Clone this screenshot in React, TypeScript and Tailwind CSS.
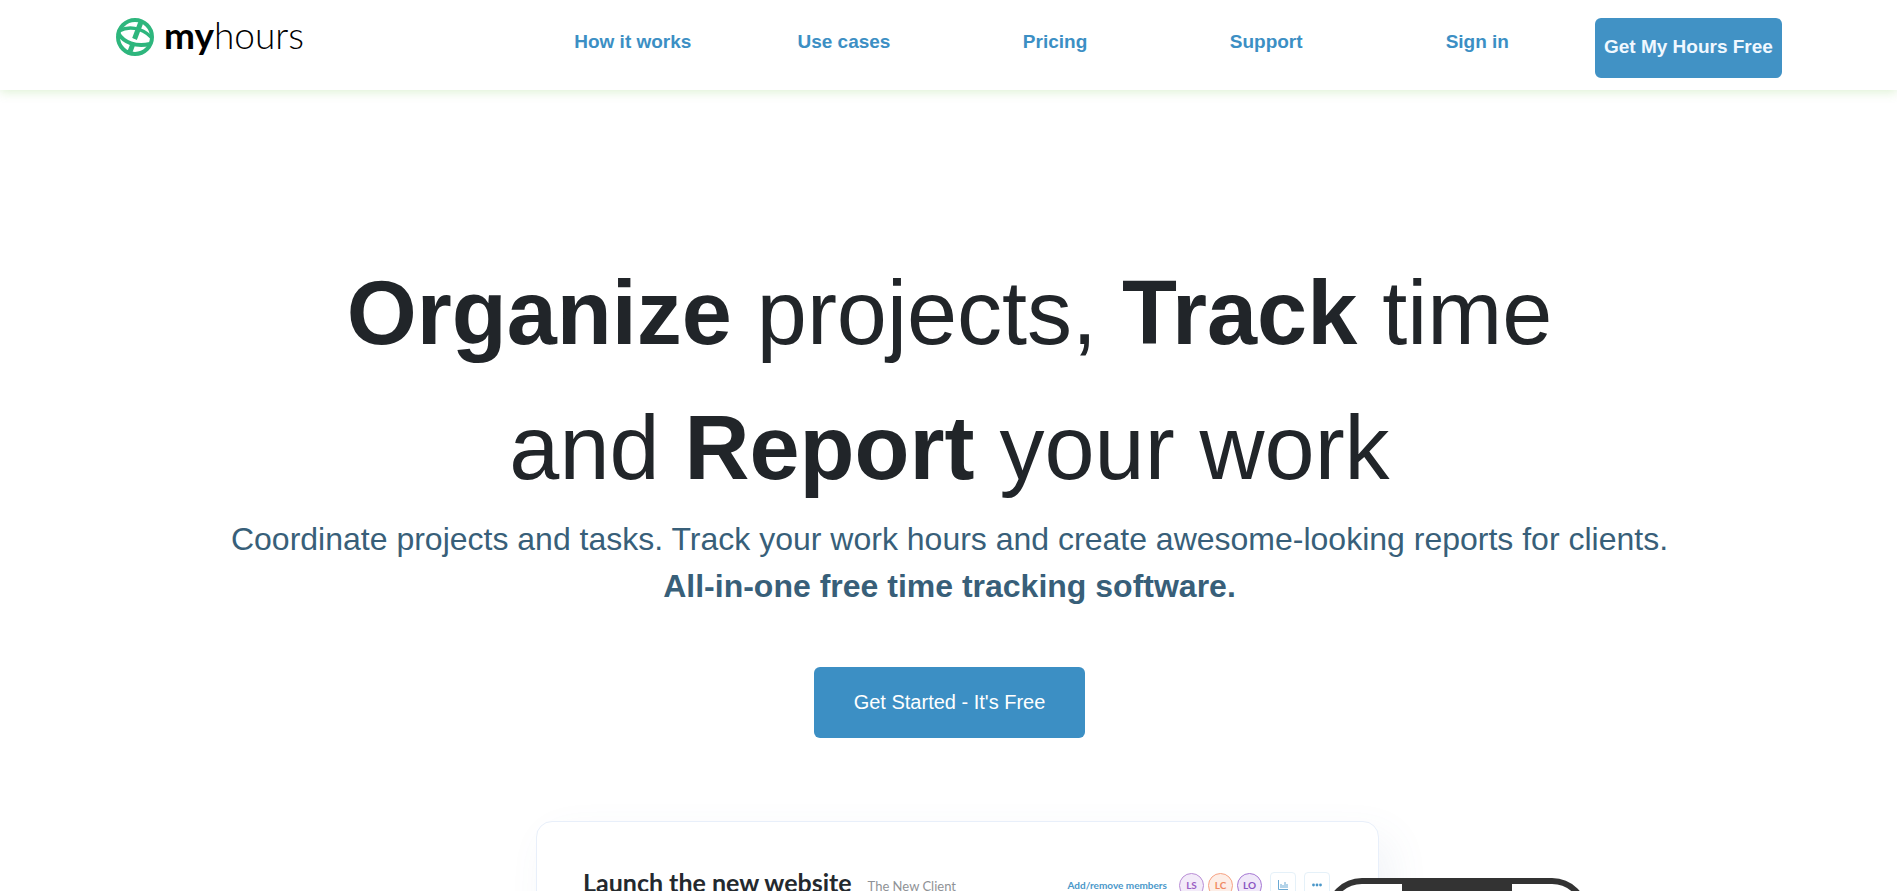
import React from 'react';

const navLinks = ['How it works', 'Use cases', 'Pricing', 'Support', 'Sign in'];

const members = [
  { initials: 'LS', tone: 'border-[#b98ed6] bg-[#f3ebf9] text-[#9b5fc4]' },
  { initials: 'LC', tone: 'border-[#f6a283] bg-[#fdeee7] text-[#f08a63]' },
  { initials: 'LO', tone: 'border-[#a678d4] bg-[#f0e8f9] text-[#8a55c2]' },
];

function Logo() {
  return (
    <a href="#home" aria-label="myhours" className="flex items-center gap-2.5">
      <svg viewBox="0 0 38 38" className="size-[38px]" fill="none" stroke="#2eb67d" strokeWidth="4">
        <circle cx="19" cy="19" r="17" />
        <path d="M3 13C12 8 25 9 35 19" strokeWidth="3.500" />
        <path d="M2 15C8 25 20 29 34 26" />
        <path d="M25 4L18.500 21" strokeWidth="5" />
        <path d="M16.500 27L13.500 35" strokeWidth="5" />
        <path d="M15 20.500C17 22 20 23 23 23.200" stroke="white" strokeWidth="1.500" />
      </svg>
      <span className="pb-1 font-[Lato,sans-serif] text-[37px] leading-[34px] text-black">
        <span className="font-bold">my</span>
        <span className="font-light">hours</span>
      </span>
    </a>
  );
}

function Header() {
  return (
    <header className="shrink-0 bg-white px-4 shadow-[0_2px_10px_rgba(120,200,80,0.25)] xl:pr-[103px] xl:pl-[105px]">
      <div className="grid h-[90px] grid-cols-8 items-start">
        <div className="col-span-2 pt-[18px] pl-[11px]">
          <Logo />
        </div>
        <nav aria-label="Main" className="col-span-5 grid grid-cols-5 pt-7">
          {navLinks.map((label) => (
            <a key={label} href="#" className="text-center text-[19px] leading-7 font-bold text-[#3c8fc4]">
              {label}
            </a>
          ))}
        </nav>
        <div className="px-3 pt-[18px]">
          <button type="button" className="h-[60px] w-full rounded-md bg-[#4192c5] pb-0.5 text-[19px] font-bold whitespace-nowrap text-[#f0f8ff]">
            Get My Hours Free
          </button>
        </div>
      </div>
    </header>
  );
}

function ProjectPreview() {
  return (
    <div className="relative mt-[83px] ml-4 w-[843px]">
      <div className="flex h-[480px] items-start rounded-2xl border border-[#e8effa] bg-white pt-11 pr-12 pl-[46px] shadow-[12px_16px_40px_rgba(90,120,170,0.08)]">
        <h2 className="font-[Lato,sans-serif] text-[25px] leading-8 font-bold text-[#24292e]">Launch the new website</h2>
        <span className="ml-4 pt-2.5 font-[Lato,sans-serif] text-[13px] leading-5 text-[#8f9296]">The New Client</span>
        <div className="ml-auto flex items-center gap-1 pt-1.5">
          <a href="#" className="mr-2 font-[Lato,sans-serif] text-[10px] font-bold text-[#4a97c9]">
            Add/remove members
          </a>
          {members.map((member) => (
            <span
              key={member.initials}
              className={`flex size-[25px] items-center justify-center rounded-full border font-[Lato,sans-serif] text-[10px] font-bold ${member.tone}`}
            >
              {member.initials}
            </span>
          ))}
          <button type="button" aria-label="Statistics" className="ml-1 flex size-[26px] items-center justify-center rounded-sm border border-[#e5f1f9]">
            <svg viewBox="0 0 10 10" className="size-[10px]" fill="none" stroke="#6aa9d3">
              <path d="M.5 0V9.500H10M3 8V4M5 8V5M7 8V2M9 8V4" />
            </svg>
          </button>
          <button type="button" aria-label="More" className="ml-1 flex size-[26px] items-center justify-center rounded-sm border border-[#e5f1f9]">
            <svg viewBox="0 0 10 4" className="h-1 w-[10px]" fill="#4a97c9">
              <circle cx="1.500" cy="2" r="1.400" />
              <circle cx="5" cy="2" r="1.400" />
              <circle cx="8.500" cy="2" r="1.400" />
            </svg>
          </button>
        </div>
      </div>
      <div className="absolute top-[57px] left-[790px] flex h-[500px] w-[262px] justify-center rounded-[36px] border-[6px] border-[#333333] bg-white">
        <div className="h-5 w-[110px] rounded-b-xl bg-[#333333]" />
      </div>
    </div>
  );
}

export default function App() {
  return (
    <div className="flex h-screen flex-col overflow-hidden bg-white font-['Liberation_Sans',Arial,sans-serif]">
      <Header />
      <main className="flex flex-col items-center pt-[156px] pr-4 pl-[18px] text-center">
        <h1 className="text-[90px] leading-[135px] text-[#212529]">
          <strong>Organize</strong> projects, <strong>Track</strong> time
          <br />
          and <strong>Report</strong> your work
        </h1>
        <p className="text-[32px] leading-[47px] text-[#385f79]">
          Coordinate projects and tasks. Track your work hours and create awesome-looking reports for clients.
          <br />
          <strong>All-in-one free time tracking software.</strong>
        </p>
        <button type="button" className="mt-[57px] h-[71px] w-[271px] shrink-0 rounded-md bg-[#3c8fc4] pb-0.5 text-xl text-white">
          Get Started - It's Free
        </button>
        <ProjectPreview />
      </main>
    </div>
  );
}
